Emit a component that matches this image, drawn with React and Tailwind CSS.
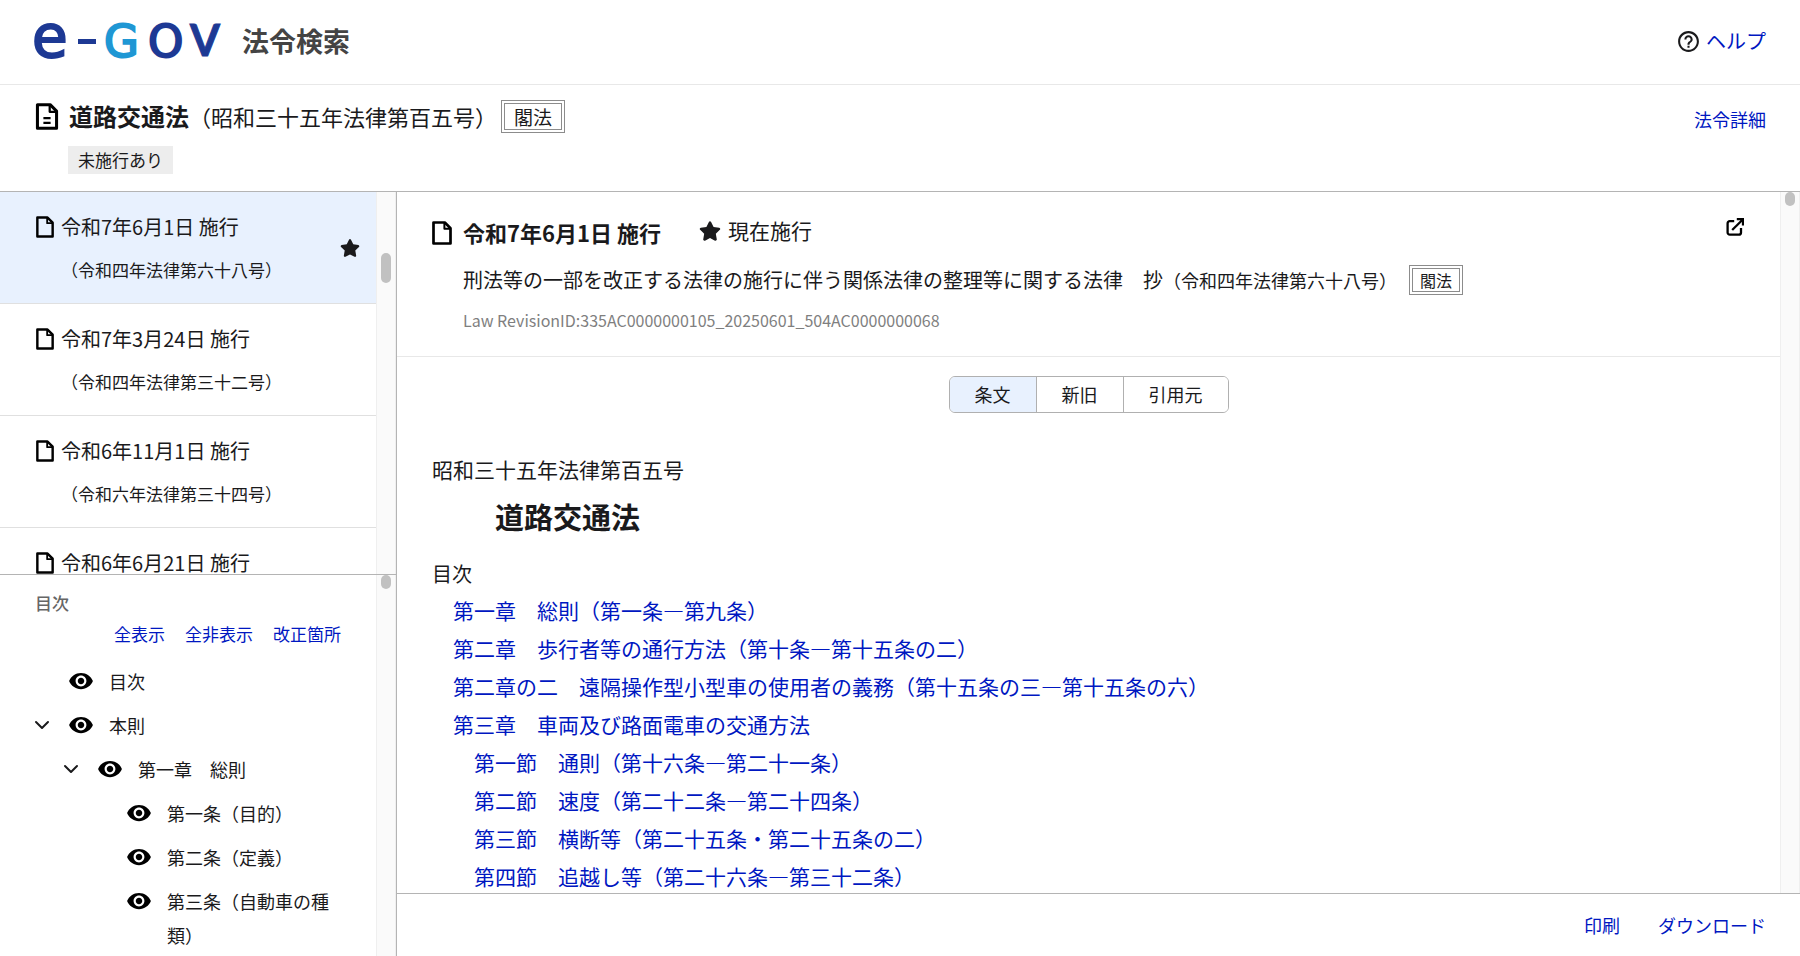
import React, { useState } from 'react'
import { MdHelpOutline, MdVisibility } from 'react-icons/md'
import { FaStar } from 'react-icons/fa'
import { ChevronDown } from 'lucide-react'

const revisions = [
  { id: 1, date: '令和7年6月1日 施行', law: '（令和四年法律第六十八号）', current: true },
  { id: 2, date: '令和7年3月24日 施行', law: '（令和四年法律第三十二号）' },
  { id: 3, date: '令和6年11月1日 施行', law: '（令和六年法律第三十四号）' },
  { id: 4, date: '令和6年6月21日 施行' }
]

const tree = [
  { label: '目次', indent: 'pl-[67px]' },
  { label: '本則', indent: 'pl-[30px]', open: true },
  { label: '第一章　総則', indent: 'pl-[59px]', open: true },
  { label: '第一条（目的）', indent: 'pl-[125px]' },
  { label: '第二条（定義）', indent: 'pl-[125px]' },
  { label: '第三条（自動車の種類）', indent: 'pl-[125px]' }
]

const contents = [
  { label: '第一章　総則（第一条―第九条）' },
  { label: '第二章　歩行者等の通行方法（第十条―第十五条の二）' },
  { label: '第二章の二　遠隔操作型小型車の使用者の義務（第十五条の三―第十五条の六）' },
  { label: '第三章　車両及び路面電車の交通方法' },
  { label: '第一節　通則（第十六条―第二十一条）', sub: true },
  { label: '第二節　速度（第二十二条―第二十四条）', sub: true },
  { label: '第三節　横断等（第二十五条・第二十五条の二）', sub: true },
  { label: '第四節　追越し等（第二十六条―第三十二条）', sub: true }
]

const tabs = ['条文', '新旧', '引用元']

const FileIcon = ({ className, lines }) => (
  <svg viewBox="0 0 20 24" fill="none" stroke="#000" strokeWidth="2.7" strokeLinejoin="round" className={className}>
    <path d="M1.5 1.5H12.8L18.5 7.2V22.5H1.5Z" />
    <path d="M12.4 2V7.8H18" strokeWidth="2" />
    {lines && <path d="M6.8 13.4H13.2M6.8 17.6H13.2" strokeWidth="2" />}
  </svg>
)

const OpenIcon = () => (
  <svg viewBox="0 0 18 18" fill="none" stroke="#000" strokeWidth="2.3" className="h-[18px] w-[18px]">
    <path d="M8.2 3.2H3.8A2.2 2.2 0 0 0 1.6 5.4V14.4A2.2 2.2 0 0 0 3.8 16.6H12.8A2.2 2.2 0 0 0 15 14.4V10" />
    <path d="M6.2 12L15.5 2.7" />
    <path d="M10.8 1.2H17V7.4" />
    <path d="M13 1H17V5Z" fill="#000" stroke="none" />
  </svg>
)

const Logo = () => (
  <svg
    viewBox="0 0 190 36"
    strokeWidth="2"
    className="h-9 w-[190px] overflow-visible font-['DejaVu_Sans',sans-serif]"
    role="img"
    aria-label="e-Gov"
  >
    <text x="-2" y="33" fontSize="58" fill="#1d3994" stroke="#1d3994">e</text>
    <rect x="44" y="15" width="18" height="5" fill="#1d3994" />
    <text x="70" y="33" fontSize="45" fill="#1f97d4" stroke="#1f97d4">G</text>
    <text x="114" y="33" fontSize="45" fill="#1d3994" stroke="#1d3994">O</text>
    <text x="156" y="32" fontSize="43" fontWeight="700" fill="#1d3994" stroke="#1d3994" strokeWidth="1" className="font-[Lato]">V</text>
  </svg>
)

const Badge = ({ className }) => (
  <span className={`border-4 border-double border-[#8c8c8c] leading-none ${className}`}>閣法</span>
)

const ScrollTrack = ({ thumb }) => (
  <div className="flex w-5 shrink-0 justify-center border-x border-[#efefef] bg-[#fafafa]">
    <div className={`w-[10px] rounded-full bg-[#c1c1c1] ${thumb}`} />
  </div>
)

const LinkText = ({ children, className }) => (
  <a href="#" className={`text-[#0017c1] ${className || ''}`}>{children}</a>
)

const RevisionList = () => (
  <div className="flex min-h-0 flex-1 border-b border-[#b4b4b4]">
    <ul className="min-w-0 flex-1 overflow-hidden">
      {revisions.map((rev) => (
        <li
          key={rev.id}
          className={`flex items-center justify-between border-b border-[#e0e0e0] pl-9 pr-4 ${rev.current ? 'bg-[#e8f1fe]' : ''}`}
        >
          <div className="pb-4 pt-[18px]">
            <div className="flex items-center gap-[7px]">
              <FileIcon className="h-[22px] w-[18px]" />
              <a href="#" className="text-[20px] leading-[34px]">{rev.date}</a>
            </div>
            {rev.law && <p className="pl-[25px] pt-[9px] text-[17px] leading-[34px]">{rev.law}</p>}
          </div>
          {rev.current && <FaStar className="h-[18px] w-[20px]" />}
        </li>
      ))}
    </ul>
    <ScrollTrack thumb="mt-[61px] h-[30px]" />
  </div>
)

const TocTree = () => (
  <div className="flex min-h-0 flex-1">
    <nav className="min-w-0 flex-1 overflow-hidden pt-[11px]">
      <h2 className="pl-[35px] text-[17px] font-medium leading-[34px] text-[#666]">目次</h2>
      <div className="flex justify-end gap-5 pr-[35px] text-[17px] leading-[28px]">
        <LinkText>全表示</LinkText>
        <LinkText>全非表示</LinkText>
        <LinkText>改正箇所</LinkText>
      </div>
      <ul className="pt-4">
        {tree.map((node) => (
          <li key={node.label} className={`flex items-start pb-[10px] pr-7 ${node.indent}`}>
            {node.open && (
              <button type="button" aria-label="開閉" className="mr-[13px] flex h-[34px] w-6 shrink-0 items-center justify-center">
                <ChevronDown className="h-6 w-6" />
              </button>
            )}
            <button type="button" aria-label="表示" className="flex h-[34px] w-7 shrink-0 items-center justify-center">
              <MdVisibility className="h-[26px] w-[26px] text-black" />
            </button>
            <a href="#" className="ml-[14px] text-[18px] leading-[34px]">{node.label}</a>
          </li>
        ))}
      </ul>
    </nav>
    <ScrollTrack thumb="h-[14px]" />
  </div>
)

const RevisionHeader = () => (
  <div className="border-b border-[#e8e8e8] pb-5 pl-[35px] pr-9 pt-[21px]">
    <div className="flex items-start justify-between">
      <div className="flex items-start">
        <FileIcon className="mt-2 h-6 w-5" />
        <h2 className="ml-[11px] text-[22px] font-bold leading-[38px]">令和7年6月1日 施行</h2>
        <FaStar className="ml-[38px] mt-2 h-5 w-[22px]" />
        <span className="ml-[7px] text-[21px] leading-[34px]">現在施行</span>
      </div>
      <button type="button" aria-label="別ウィンドウで開く" className="pt-[5px]">
        <OpenIcon />
      </button>
    </div>
    <div className="flex items-center pl-[31px] pt-[9px] leading-10">
      <p className="text-[20px]">
        刑法等の一部を改正する法律の施行に伴う関係法律の整理等に関する法律　抄
        <span className="text-[18px]">（令和四年法律第六十八号）</span>
      </p>
      <Badge className="ml-3 px-[7px] py-[3px] text-[16px]" />
    </div>
    <p className="pl-[31px] pt-1 text-[16px] leading-8 text-[#7f7f7f]">
      Law RevisionID:335AC0000000105_20250601_504AC0000000068
    </p>
  </div>
)

const LawBody = () => {
  const [active, setActive] = useState('条文')

  return (
    <div className="flex min-h-0 flex-1">
      <div className="min-w-0 flex-1 overflow-hidden">
        <RevisionHeader />

        <div className="flex justify-center pt-[19px]">
          <div className="flex divide-x divide-[#b0b0b0] overflow-hidden rounded-md border border-[#b0b0b0]">
            {tabs.map((tab) => (
              <button
                key={tab}
                type="button"
                onClick={() => setActive(tab)}
                className={`px-[25px] text-[18px] leading-[35px] ${active === tab ? 'bg-[#e8f1fe]' : 'bg-white'}`}
              >
                {tab}
              </button>
            ))}
          </div>
        </div>

        <article className="px-[35px] pt-[37px] text-[21px] leading-[38px]">
          <p>昭和三十五年法律第百五号</p>
          <h1 className="pl-[63px] pt-1 text-[29px] font-bold leading-[48px]">道路交通法</h1>
          <p className="pt-4 text-[20px] leading-[35px]">目次</p>
          <ul>
            {contents.map((item) => (
              <li key={item.label} className={item.sub ? 'pl-[42px]' : 'pl-[21px]'}>
                <LinkText>{item.label}</LinkText>
              </li>
            ))}
          </ul>
        </article>
      </div>
      <ScrollTrack thumb="h-[14px]" />
    </div>
  )
}

const App = () => {
  return (
    <div className="flex h-screen flex-col bg-white font-['Noto_Sans_CJK_JP',sans-serif] text-[#1a1a1c]">
      {/* Site header */}
      <header className="flex items-start justify-between border-b border-[#e8e8e8] px-[34px] py-6">
        <a href="#" className="flex items-start gap-[18px]">
          <Logo />
          <span className="text-[27px] font-bold leading-[34px] text-[#444]">法令検索</span>
        </a>
        <div className="flex items-center gap-[5px] leading-[34px]">
          <MdHelpOutline className="h-[25px] w-[25px]" />
          <LinkText className="text-[20px]">ヘルプ</LinkText>
        </div>
      </header>

      {/* Law title */}
      <div className="flex items-start justify-between border-b border-[#b4b4b4] px-[34px] pb-[17px] pt-[11px]">
        <div>
          <div className="flex items-center">
            <FileIcon lines className="ml-px h-[27px] w-[24px]" />
            <strong className="ml-[10px] text-[24px] leading-10">道路交通法</strong>
            <span className="text-[22px] leading-10">（昭和三十五年法律第百五号）</span>
            <Badge className="ml-1 px-[9px] py-[3px] text-[19px]" />
          </div>
          <span className="ml-[34px] mt-[10px] block w-fit bg-[#ededed] px-[10px] text-[17px] leading-7">未施行あり</span>
        </div>
        <LinkText className="pt-[10px] text-[18px]">法令詳細</LinkText>
      </div>

      {/* Panes */}
      <div className="flex min-h-0 flex-1">
        <aside className="flex w-[22%] shrink-0 flex-col">
          <RevisionList />
          <TocTree />
        </aside>
        <main className="flex min-w-0 flex-1 flex-col border-l border-[#b4b4b4]">
          <LawBody />
          <footer className="flex justify-end gap-[38px] border-t border-[#b4b4b4] px-[34px] text-[18px] leading-[62px]">
            <LinkText>印刷</LinkText>
            <LinkText>ダウンロード</LinkText>
          </footer>
        </main>
      </div>
    </div>
  )
}

export default App
